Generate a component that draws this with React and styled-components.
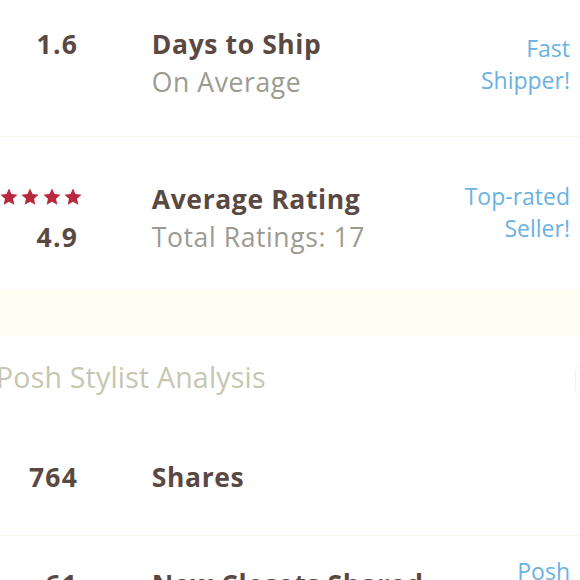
import React from "react";
import styled, { createGlobalStyle } from "styled-components";

const GlobalStyle = createGlobalStyle`
  html, body {
    margin: 0;
    padding: 0;
    background: #ffffff;
    overflow: hidden;
  }
  body {
    font-family: "Open Sans", "Noto Sans", "Liberation Sans", sans-serif;
    -webkit-font-smoothing: antialiased;
  }
`;

const Page = styled.div`
  width: 580px;
  height: 580px;
  overflow: hidden;
`;

const StatRow = styled.div`
  display: flex;
  align-items: flex-start;
  padding: ${(p) => p.$pad || "0"};
  padding-right: 10px;
`;

const Figure = styled.div`
  width: 78px;
  flex-shrink: 0;
  display: flex;
  flex-direction: column;
  align-items: flex-end;
  padding-top: ${(p) => p.$top || 0}px;
  font-size: 26.5px;
  font-weight: 700;
  line-height: 38px;
  letter-spacing: 1.2px;
  margin-right: -1.2px;
  color: #5a4943;
`;

const Stars = styled.div`
  display: flex;
  gap: 3.5px;
  height: 38px;
  align-items: flex-start;
  padding-top: 8px;
  margin-right: -4px;
  box-sizing: border-box;
  svg {
    width: 18px;
    height: 18px;
    flex-shrink: 0;
  }
`;

const Label = styled.div`
  flex: 1;
  margin-left: 75px;
  display: flex;
  flex-direction: column;
  padding-top: ${(p) => p.$top || 0}px;
`;

const Title = styled.div`
  font-size: 26.5px;
  font-weight: 700;
  line-height: 38px;
  letter-spacing: 0.6px;
  color: #5a4943;
  white-space: nowrap;
`;

const Sub = styled.div`
  font-size: 26.5px;
  font-weight: 400;
  line-height: 38.5px;
  letter-spacing: 0.6px;
  color: #9b9b90;
`;

const Badge = styled.div`
  text-align: right;
  font-size: 23px;
  line-height: 32px;
  color: #6bb2e2;
  padding-top: ${(p) => p.$top || 0}px;
`;

const Divider = styled.div`
  height: 1px;
  background: #faf8ea;
`;

const Band = styled.div`
  height: 47px;
  background: #fffef3;
`;

const SectionHeader = styled.div`
  display: flex;
  justify-content: space-between;
  align-items: flex-start;
  padding-top: 22px;
  height: 84px;
  box-sizing: border-box;
`;

const SectionTitle = styled.div`
  margin-left: -4px;
  font-size: 28.5px;
  line-height: 38px;
  letter-spacing: 0.2px;
  color: #c5c7b0;
`;

const GhostButton = styled.div`
  width: 40px;
  height: 32px;
  margin-right: -37px;
  margin-top: 6px;
  border: 1px solid #f6f4dc;
  border-radius: 8px;
`;

const Star = () => (
  <svg viewBox="0 0 24 24">
    <path
      fill="#b8293e"
      d="M12 0.8l3.4 7.3 8 .9-6 5.4 1.7 7.9L12 18.2l-7.1 4.1 1.7-7.9-6-5.4 8-.9z"
    />
  </svg>
);

export default function App() {
  return (
    <Page>
      <GlobalStyle />
      <StatRow $pad="25px 0 34px 0">
        <Figure>1.6</Figure>
        <Label>
          <Title>Days to Ship</Title>
          <Sub>On Average</Sub>
        </Label>
        <Badge $top={7}>
          Fast
          <br />
          Shipper!
        </Badge>
      </StatRow>
      <Divider />
      <StatRow $pad="43px 0 33px 0">
        <Figure>
          <Stars>
            <Star />
            <Star />
            <Star />
            <Star />
            <Star />
          </Stars>
          4.9
        </Figure>
        <Label>
          <Title>Average Rating</Title>
          <Sub>Total Ratings: 17</Sub>
        </Label>
        <Badge $top={0}>
          Top-rated
          <br />
          Seller!
        </Badge>
      </StatRow>
      <Band />
      <SectionHeader>
        <SectionTitle>Posh Stylist Analysis</SectionTitle>
        <GhostButton />
      </SectionHeader>
      <StatRow $pad="38px 0 39px 0">
        <Figure>764</Figure>
        <Label>
          <Title>Shares</Title>
        </Label>
      </StatRow>
      <Divider />
      <StatRow $pad="19px 0 0 0">
        <Figure $top={10}>61</Figure>
        <Label $top={10}>
          <Title>New Closets Shared</Title>
        </Label>
        <Badge $top={0}>
          Posh
          <br />
          Ambassador!
        </Badge>
      </StatRow>
    </Page>
  );
}
